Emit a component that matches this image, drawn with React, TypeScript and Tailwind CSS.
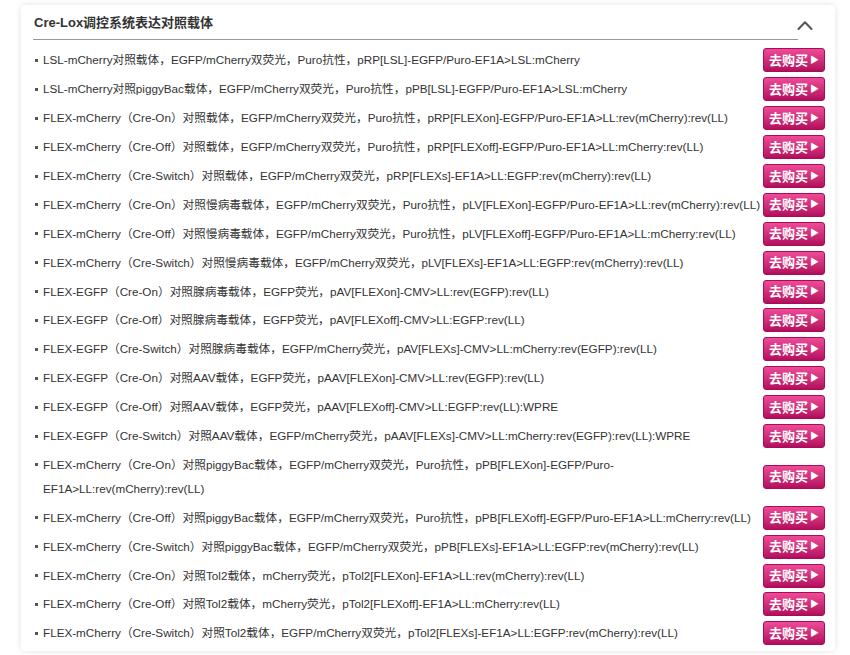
const items: { text: string; wrap?: [string, string] }[] = [
  { text: 'LSL-mCherry对照载体，EGFP/mCherry双荧光，Puro抗性，pRP[LSL]-EGFP/Puro-EF1A>LSL:mCherry' },
  { text: 'LSL-mCherry对照piggyBac载体，EGFP/mCherry双荧光，Puro抗性，pPB[LSL]-EGFP/Puro-EF1A>LSL:mCherry' },
  { text: 'FLEX-mCherry（Cre-On）对照载体，EGFP/mCherry双荧光，Puro抗性，pRP[FLEXon]-EGFP/Puro-EF1A>LL:rev(mCherry):rev(LL)' },
  { text: 'FLEX-mCherry（Cre-Off）对照载体，EGFP/mCherry双荧光，Puro抗性，pRP[FLEXoff]-EGFP/Puro-EF1A>LL:mCherry:rev(LL)' },
  { text: 'FLEX-mCherry（Cre-Switch）对照载体，EGFP/mCherry双荧光，pRP[FLEXs]-EF1A>LL:EGFP:rev(mCherry):rev(LL)' },
  { text: 'FLEX-mCherry（Cre-On）对照慢病毒载体，EGFP/mCherry双荧光，Puro抗性，pLV[FLEXon]-EGFP/Puro-EF1A>LL:rev(mCherry):rev(LL)' },
  { text: 'FLEX-mCherry（Cre-Off）对照慢病毒载体，EGFP/mCherry双荧光，Puro抗性，pLV[FLEXoff]-EGFP/Puro-EF1A>LL:mCherry:rev(LL)' },
  { text: 'FLEX-mCherry（Cre-Switch）对照慢病毒载体，EGFP/mCherry双荧光，pLV[FLEXs]-EF1A>LL:EGFP:rev(mCherry):rev(LL)' },
  { text: 'FLEX-EGFP（Cre-On）对照腺病毒载体，EGFP荧光，pAV[FLEXon]-CMV>LL:rev(EGFP):rev(LL)' },
  { text: 'FLEX-EGFP（Cre-Off）对照腺病毒载体，EGFP荧光，pAV[FLEXoff]-CMV>LL:EGFP:rev(LL)' },
  { text: 'FLEX-EGFP（Cre-Switch）对照腺病毒载体，EGFP/mCherry荧光，pAV[FLEXs]-CMV>LL:mCherry:rev(EGFP):rev(LL)' },
  { text: 'FLEX-EGFP（Cre-On）对照AAV载体，EGFP荧光，pAAV[FLEXon]-CMV>LL:rev(EGFP):rev(LL)' },
  { text: 'FLEX-EGFP（Cre-Off）对照AAV载体，EGFP荧光，pAAV[FLEXoff]-CMV>LL:EGFP:rev(LL):WPRE' },
  { text: 'FLEX-EGFP（Cre-Switch）对照AAV载体，EGFP/mCherry荧光，pAAV[FLEXs]-CMV>LL:mCherry:rev(EGFP):rev(LL):WPRE' },
  {
    text: '',
    wrap: [
      'FLEX-mCherry（Cre-On）对照piggyBac载体，EGFP/mCherry双荧光，Puro抗性，pPB[FLEXon]-EGFP/Puro-',
      'EF1A>LL:rev(mCherry):rev(LL)',
    ],
  },
  { text: 'FLEX-mCherry（Cre-Off）对照piggyBac载体，EGFP/mCherry双荧光，Puro抗性，pPB[FLEXoff]-EGFP/Puro-EF1A>LL:mCherry:rev(LL)' },
  { text: 'FLEX-mCherry（Cre-Switch）对照piggyBac载体，EGFP/mCherry双荧光，pPB[FLEXs]-EF1A>LL:EGFP:rev(mCherry):rev(LL)' },
  { text: 'FLEX-mCherry（Cre-On）对照Tol2载体，mCherry荧光，pTol2[FLEXon]-EF1A>LL:rev(mCherry):rev(LL)' },
  { text: 'FLEX-mCherry（Cre-Off）对照Tol2载体，mCherry荧光，pTol2[FLEXoff]-EF1A>LL:mCherry:rev(LL)' },
  { text: 'FLEX-mCherry（Cre-Switch）对照Tol2载体，EGFP/mCherry双荧光，pTol2[FLEXs]-EF1A>LL:EGFP:rev(mCherry):rev(LL)' },
]

function BuyButton() {
  return (
    <button className="shrink-0 w-[62px] h-[24px] rounded-[3px] border border-[#a80c57] bg-gradient-to-b from-[#ee4a98] to-[#b30c5e] text-white font-bold text-[13px] leading-none flex items-center justify-center gap-[2px]">
      <span>去购买</span>
      <span className="text-[9px]">▶</span>
    </button>
  )
}

export default function App() {
  return (
    <div
      className="min-h-[655px] bg-white pt-[5px] pl-[21px]"
      style={{ fontFamily: '"Liberation Sans", Arial, "Noto Sans CJK SC", sans-serif' }}
    >
      <div className="w-[814px] bg-white rounded-[4px] shadow-[0_0_6px_rgba(0,0,0,0.12)] pl-[12px] pr-[10px] pb-[3px]">
        {/* Header */}
        <div className="flex items-end h-[35px]">
          <div className="flex-1 h-full border-b border-[#999] flex items-center pl-[1px] pt-[2px]">
            <h3 className="text-[13px] font-bold text-[#333]">Cre-Lox调控系统表达对照载体</h3>
          </div>
          <div className="w-[27px] h-full flex items-center pt-[4px]">
            <svg width="16" height="10" viewBox="0 0 16 10" className="-ml-[1px]">
              <path d="M1.5 9 L8 2.2 L14.5 9" fill="none" stroke="#555" strokeWidth="2" strokeLinecap="round" strokeLinejoin="round" />
            </svg>
          </div>
        </div>

        {/* List */}
        <ul className="pt-[6px]">
          {items.map((item, i) => (
            <li key={i} className="flex items-center min-h-[28.9px] py-[2.45px]">
              <div className="flex-1 flex text-[11.7px] leading-[24px] text-[#333] whitespace-nowrap">
                <span className="w-[10px] shrink-0 flex items-center h-[24px] pl-[2px]">
                  <span className="block w-[3px] h-[3px] bg-[#555]" />
                </span>
                <span>
                  {item.wrap ? (
                    <>
                      {item.wrap[0]}
                      <br />
                      {item.wrap[1]}
                    </>
                  ) : (
                    item.text
                  )}
                </span>
              </div>
              <BuyButton />
            </li>
          ))}
        </ul>
      </div>
    </div>
  )
}
